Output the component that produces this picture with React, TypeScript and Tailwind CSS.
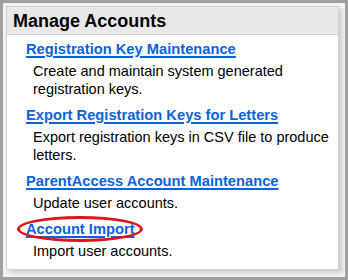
const ITEMS: Array<{ title: string; desc: string; circled?: boolean }> = [
  { title: "Registration Key Maintenance", desc: "Create and maintain system generated registration keys." },
  { title: "Export Registration Keys for Letters", desc: "Export registration keys in CSV file to produce letters." },
  { title: "ParentAccess Account Maintenance", desc: "Update user accounts." },
  { title: "Account Import", desc: "Import user accounts.", circled: true },
];

export default function App() {
  return (
    <div
      className="w-[348px] h-[280px] bg-[#a0a0a0] p-[3px]"
      style={{ fontFamily: '"Liberation Sans", Arial, sans-serif' }}
    >
      <div className="w-full h-full bg-[#f2f2f2] pt-[3px] pl-[3px]">
        <div className="w-[333px] h-[264px] bg-white border border-[#cfcfcf] shadow-[3px_3px_4px_rgba(0,0,0,0.15)]">
          <div className="h-[28px] bg-[#e8e8e8] border-b border-[#d4d4d4] pl-[6px] flex items-center">
            <h2 className="text-[18px] font-bold text-black leading-none">Manage Accounts</h2>
          </div>
          <div className="pl-[19px] pr-[3px] pt-[2px] flex flex-col gap-[5px]">
            {ITEMS.map((item) => (
              <div key={item.title}>
                <div className="relative inline-block text-[14.7px] leading-[24px]">
                  <a
                    href="#"
                    className="font-bold text-[#0a62dc] underline decoration-2 underline-offset-2"
                  >
                    {item.title}
                  </a>
                  {item.circled && (
                    <span className="absolute -left-[9px] -right-[8px] -top-[1px] -bottom-[1px] border-[3px] border-[#e0141c] rounded-[50%]" />
                  )}
                </div>
                <p className="mt-[1px] pl-[7px] text-[14.5px] text-black leading-[18px]">{item.desc}</p>
              </div>
            ))}
          </div>
        </div>
      </div>
    </div>
  );
}
